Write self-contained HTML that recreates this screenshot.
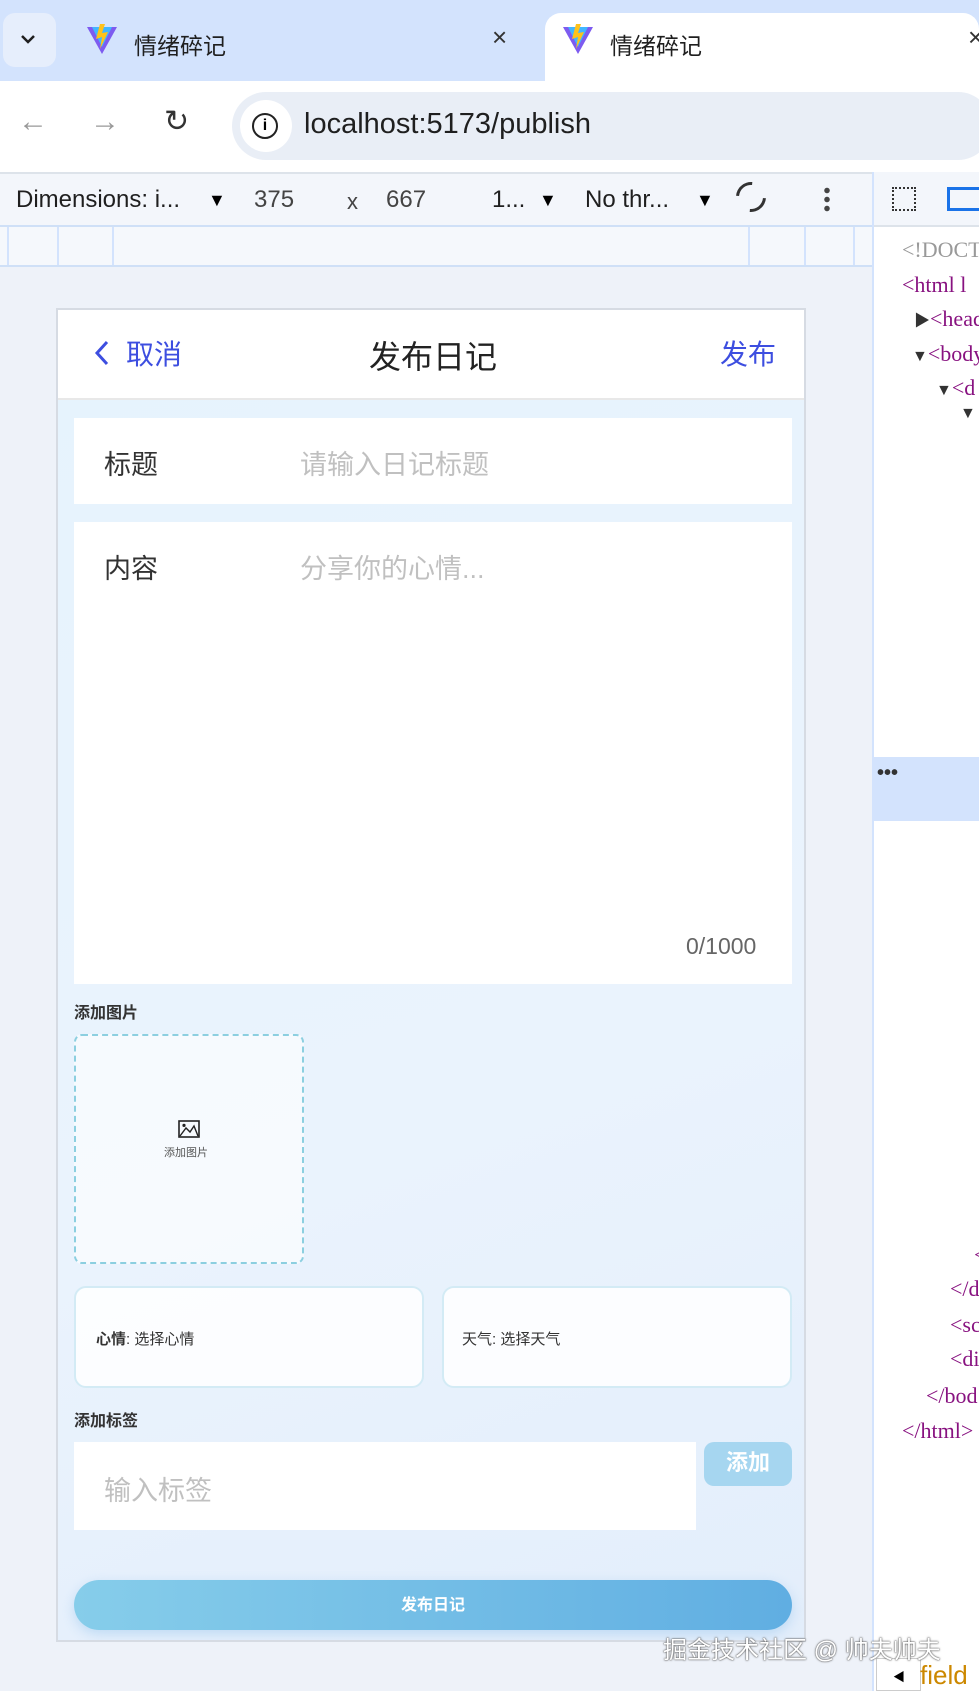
<!DOCTYPE html>
<html><head><meta charset="utf-8"><style>
*{box-sizing:border-box;margin:0;padding:0}
body{width:979px;height:1691px;overflow:hidden;background:#eef2f9;font-family:"Liberation Sans","Noto Sans CJK SC",sans-serif;position:relative}
.abs{position:absolute}
.tabs{left:0;top:0;width:979px;height:81px;background:#d3e3fd}
.tabtxt{font-size:23px;color:#1f1f1f}
.code{font-family:"Liberation Serif","Noto Serif CJK SC",serif;font-size:22px;color:#881280;white-space:nowrap}
.phone{left:56px;top:308px;width:375px;height:667px;transform:scale(2);transform-origin:0 0;background:linear-gradient(160deg,#e6f3fd,#eaf3fd 60%,#e3eefb);border:0.4px solid #d6dbe3;overflow:hidden}
.ph{font-family:"Liberation Sans","Noto Sans CJK SC",sans-serif}
</style></head><body>
<div class="abs tabs"></div>
<div class="abs" style="left:3px;top:13px;width:53px;height:54px;background:#e6eefc;border-radius:12px"></div>
<svg class="abs" style="left:20px;top:34px" width="16" height="12"><path d="M2 2l6 6 6-6" stroke="#1f1f1f" stroke-width="2.5" fill="none"/></svg>
<svg class="abs" style="left:86px;top:24px" width="32" height="32" viewBox="0 0 32 32"><path d="M1 3l15 27L31 3z" fill="#7d5bf0"/><path d="M6 3l10 20L26 3" fill="#41b6ff"/><path d="M14 0l-4 15 6-2-2 12 8-17-6 1 3-9z" fill="#ffc21a"/></svg>
<div class="abs tabtxt" style="left:134px;top:27px">情绪碎记</div>
<div class="abs" style="left:492px;top:22px;font-size:26px;color:#333">×</div>
<div class="abs" style="left:545px;top:13px;width:434px;height:70px;background:#fff;border-radius:16px 16px 0 0"></div>
<svg class="abs" style="left:562px;top:24px" width="32" height="32" viewBox="0 0 32 32"><path d="M1 3l15 27L31 3z" fill="#7d5bf0"/><path d="M6 3l10 20L26 3" fill="#41b6ff"/><path d="M14 0l-4 15 6-2-2 12 8-17-6 1 3-9z" fill="#ffc21a"/></svg>
<div class="abs tabtxt" style="left:610px;top:27px">情绪碎记</div>
<div class="abs" style="left:968px;top:22px;font-size:26px;color:#333">×</div>
<div class="abs" style="left:0;top:81px;width:979px;height:92px;background:#fff"></div>
<div class="abs" style="left:18px;top:105px;font-size:30px;color:#999">←</div>
<div class="abs" style="left:90px;top:105px;font-size:30px;color:#999">→</div>
<div class="abs" style="left:164px;top:104px;font-size:30px;color:#333">↻</div>
<div class="abs" style="left:232px;top:92px;width:760px;height:68px;background:#e9eef6;border-radius:34px"></div>
<div class="abs" style="left:240px;top:100px;width:52px;height:52px;background:#fff;border-radius:26px"></div>
<div class="abs" style="left:252px;top:113px;width:26px;height:26px;border:2.5px solid #222;border-radius:50%;font-size:16px;font-weight:bold;text-align:center;line-height:21px">i</div>
<div class="abs" style="left:304px;top:108px;font-size:29px;color:#1f1f1f">localhost:5173/publish</div>
<div class="abs" style="left:0;top:172px;width:979px;height:55px;background:#f3f6fb;border-top:2px solid #dde3ea;border-bottom:2px solid #cfe0f7"></div>
<div class="abs" style="left:16px;top:186px;font-size:24px;color:#1f1f1f">Dimensions: i...</div>
<div class="abs" style="left:208px;top:190px;font-size:18px">▼</div>
<div class="abs" style="left:254px;top:186px;font-size:24px;color:#444">375</div>
<div class="abs" style="left:347px;top:189px;font-size:22px;color:#444">x</div>
<div class="abs" style="left:386px;top:186px;font-size:24px;color:#444">667</div>
<div class="abs" style="left:492px;top:186px;font-size:24px;color:#1f1f1f">1...</div>
<div class="abs" style="left:539px;top:190px;font-size:18px">▼</div>
<div class="abs" style="left:585px;top:186px;font-size:24px;color:#1f1f1f">No thr...</div>
<div class="abs" style="left:696px;top:190px;font-size:18px">▼</div>
<div class="abs" style="left:736px;top:182px;width:30px;height:30px;border:3px solid #333;border-radius:50%;border-left-color:transparent;border-right-color:transparent;transform:rotate(-40deg)"></div>
<div class="abs" style="left:824px;top:186px;width:6px;height:26px;background:radial-gradient(circle,#444 2.5px,transparent 3px) 0 0/6px 9px"></div>
<div class="abs" style="left:0;top:227px;width:872px;height:40px;background:#f5f8fc;border-bottom:2px solid #cfe0f7"></div>
<div class="abs" style="left:7px;top:227px;width:2px;height:38px;background:#d3e3fd"></div>
<div class="abs" style="left:57px;top:227px;width:2px;height:38px;background:#d3e3fd"></div>
<div class="abs" style="left:112px;top:227px;width:2px;height:38px;background:#d3e3fd"></div>
<div class="abs" style="left:748px;top:227px;width:2px;height:38px;background:#d3e3fd"></div>
<div class="abs" style="left:804px;top:227px;width:2px;height:38px;background:#d3e3fd"></div>
<div class="abs" style="left:853px;top:227px;width:2px;height:38px;background:#d3e3fd"></div>
<div class="abs" style="left:872px;top:172px;width:107px;height:1519px;background:#fff;border-left:2px solid #d3e3fd"></div>
<div class="abs" style="left:874px;top:172px;width:105px;height:55px;background:#f3f6fb;border-bottom:2px solid #dde3ea"></div>
<div class="abs" style="left:892px;top:187px;width:24px;height:24px;border:2.5px dotted #333"></div>
<div class="abs" style="left:947px;top:187px;width:32px;height:24px;border:3px solid #1a73e8;border-right:none"></div>
<div class="abs" style="left:874px;top:757px;width:105px;height:64px;background:#d3e3fd"></div>
<div class="abs" style="left:877px;top:762px;font-size:20px;font-weight:bold;color:#333">•••</div>
<div class="abs code" style="left:902px;top:237px;color:#999">&lt;!DOCTYPE</div>
<div class="abs code" style="left:902px;top:272px">&lt;html l</div>
<div class="abs code" style="left:914px;top:306px"><span style="color:#333;font-size:16px">▶</span>&lt;head</div>
<div class="abs code" style="left:912px;top:341px"><span style="color:#333;font-size:16px">▼</span>&lt;body</div>
<div class="abs code" style="left:936px;top:375px"><span style="color:#333;font-size:16px">▼</span>&lt;d</div>
<div class="abs code" style="left:960px;top:405px;color:#333;font-size:16px">▼</div>
<div class="abs code" style="left:974px;top:1242px">&lt;</div>
<div class="abs code" style="left:950px;top:1276px">&lt;/d</div>
<div class="abs code" style="left:950px;top:1312px">&lt;sc</div>
<div class="abs code" style="left:950px;top:1346px">&lt;di</div>
<div class="abs code" style="left:926px;top:1383px">&lt;/bod</div>
<div class="abs code" style="left:902px;top:1418px">&lt;/html&gt;</div>
<div class="abs" style="left:876px;top:1658px;width:45px;height:33px;background:#fff;border:1px solid #ccc"></div>
<div class="abs" style="left:893px;top:1668px;font-size:12px">◀</div>
<div class="abs" style="left:920px;top:1660px;font-size:26px;color:#c80">field</div>
<div class="abs phone ph">
  <div class="abs" style="left:0;top:0;width:375px;height:45px;background:#fff;border-bottom:0.5px solid #e8e8e8"></div>
  <svg class="abs" style="left:18px;top:15px" width="8" height="13"><path d="M6.5 1L1.5 6.5l5 5.5" stroke="#3d4ee0" stroke-width="1.5" fill="none"/></svg>
  <div class="abs" style="left:34px;top:12px;font-size:14px;color:#3d4ee0">取消</div>
  <div class="abs" style="left:0;top:10px;width:375px;text-align:center;font-size:16px;color:#222">发布日记</div>
  <div class="abs" style="left:331px;top:12px;font-size:14px;color:#3d4ee0">发布</div>
  <div class="abs" style="left:8px;top:54px;width:359px;height:43px;background:#fff"></div>
  <div class="abs" style="left:23px;top:66px;font-size:13.5px;color:#333">标题</div>
  <div class="abs" style="left:121px;top:66px;font-size:13.5px;color:#c0c0c0">请输入日记标题</div>
  <div class="abs" style="left:8px;top:106px;width:359px;height:231px;background:#fff"></div>
  <div class="abs" style="left:23px;top:118px;font-size:13.5px;color:#333">内容</div>
  <div class="abs" style="left:121px;top:118px;font-size:13.5px;color:#c0c0c0">分享你的心情...</div>
  <div class="abs" style="left:314px;top:313px;font-size:11.5px;color:#666">0/1000</div>
  <div class="abs" style="left:8px;top:346px;font-size:8px;font-weight:bold;color:#333">添加图片</div>
  <div class="abs" style="left:8px;top:362px;width:115px;height:115px;border:1px dashed #8ccfe0;border-radius:4px;background:rgba(255,255,255,.6)"></div>
  <svg class="abs" style="left:60px;top:405px" width="11" height="9" viewBox="0 0 11 9"><rect x=".5" y=".5" width="10" height="8" fill="none" stroke="#222" stroke-width=".8"/><path d="M1 8l3-4 2 2 2-3 2 5" fill="none" stroke="#222" stroke-width=".7"/><circle cx="3" cy="2.7" r=".8" fill="#222"/></svg>
  <div class="abs" style="left:53px;top:417px;font-size:5.5px;color:#555">添加图片</div>
  <div class="abs" style="left:8px;top:488px;width:175px;height:51px;background:rgba(255,255,255,.85);border:0.5px solid #d3ebf5;border-radius:6px"></div>
  <div class="abs" style="left:19px;top:509px;font-size:7.5px;color:#333"><b>心情</b>: 选择心情</div>
  <div class="abs" style="left:192px;top:488px;width:175px;height:51px;background:rgba(255,255,255,.85);border:0.5px solid #d3ebf5;border-radius:6px"></div>
  <div class="abs" style="left:202px;top:509px;font-size:7.5px;color:#333">天气: 选择天气</div>
  <div class="abs" style="left:8px;top:550px;font-size:8px;font-weight:bold;color:#333">添加标签</div>
  <div class="abs" style="left:8px;top:566px;width:311px;height:44px;background:#fff"></div>
  <div class="abs" style="left:23px;top:579px;font-size:13.5px;color:#c0c0c0">输入标签</div>
  <div class="abs" style="left:323px;top:566px;width:44px;height:22px;background:#a6d6f0;border-radius:5px;color:#fff;font-size:11px;font-weight:bold;text-align:center;line-height:22px">添加</div>
  <div class="abs" style="left:8px;top:635px;width:359px;height:25px;border-radius:13px;background:linear-gradient(90deg,#86cdea,#60aee2);box-shadow:0 2px 6px rgba(100,170,230,.3);color:#fff;font-size:8px;font-weight:bold;text-align:center;line-height:25px">发布日记</div>
</div>
<div class="abs" style="left:663px;top:1630px;font-size:24px;color:#fff;text-shadow:0 0 2px #555,0 0 1px #333">掘金技术社区 @ 帅夫帅夫</div>
</body></html>
